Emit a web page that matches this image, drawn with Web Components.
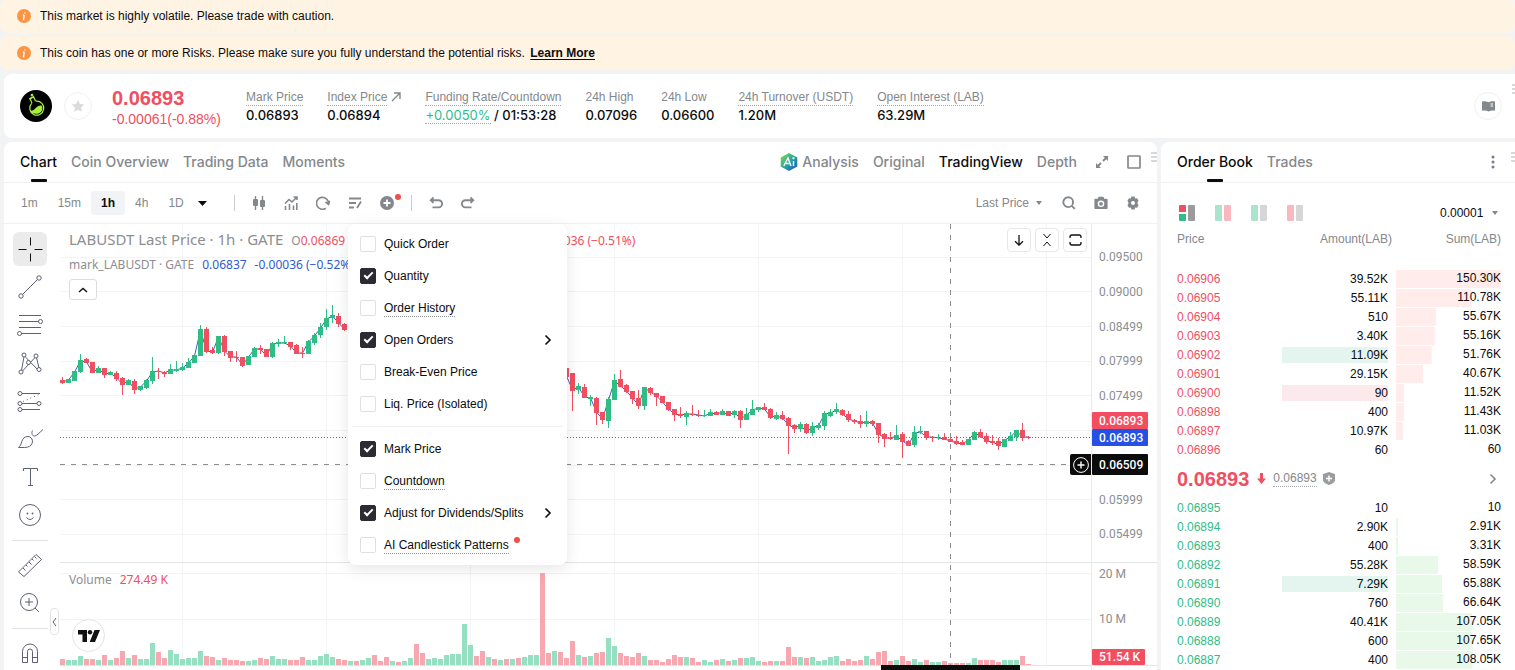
<!DOCTYPE html>
<html lang="en">
<head>
<meta charset="utf-8">
<title>LABUSDT Perpetual Futures</title>
<style>
  :root {
    --ink: #0c0c0d;
    --muted: #84888c;
    --line: #f0f1f2;
    --up: #2fbd85;
    --down: #ef4f60;
    --page: #f2f3f4;
    --ui: "Liberation Sans", Arial, sans-serif;
    --display: Inter, "Liberation Sans", sans-serif;
    --legend: "Noto Sans", "Open Sans", sans-serif;
  }
  html, body { height: 100%; margin: 0; overflow: hidden; background: var(--page); }
  body { font: 12px/16px var(--ui); color: var(--ink); }
</style>
</head>
<body>
<trade-app></trade-app>

<script>
const ICONS = {
  info: `<circle cx="7" cy="7" r="7" fill="#fb9543"/><path d="M7.9 3.2v1.2M7.3 6l-.8 4.6M5.9 6.2h1.3M5.8 10.6h1.5" stroke="#fff" stroke-width="1.3" fill="none"/>`,
  logo: `<circle cx="16" cy="16" r="16" fill="#000"/><g fill="none" stroke="#a6f03a" stroke-width="1.2"><path d="M12 13.2 10 8.6l3.6-1.7 2 4.4"/><path d="M16 11.2a7 7 0 1 1-4.4 2.2"/><circle cx="12" cy="5.2" r=".8"/><path d="M9 9l5-2.300"/></g><path d="M9.800 20.500c3 .5 4-.5 6-2.500s4-3 6.200-2c1.500 5-2 8-6 7.800-3 0-5.500-1.300-6.200-3.300z" fill="#a6f03a"/>`,
  star: `<path d="M7 1l1.900 3.900 4.300.6-3.100 3 .7 4.300L7 10.800 3.200 12.800l.7-4.300-3.100-3 4.300-.6z" fill="#d9dbdd"/>`,
  out: `<path d="M1 9l8-8M3 1h6v6" fill="none" stroke="currentColor" stroke-width="1.400"/>`,
  book: `<path d="M0 1.500c2.500-.6 4.300-.3 6.500.8v9.200c-1.700-1-3.500-1.200-6.500-.8zM6.500 2.300c1.700-1.100 3.500-1.400 6.500-.8v9.200c-2.500-.4-4.300-.2-6.500.8z" fill="currentColor"/><path d="M8.500 4H11M8.500 6H11" stroke="#fff"/>`,
  candles: `<path d="M3.500 0v14M10.500 0v14" stroke="currentColor" stroke-width="1.400"/><rect x="1" y="3" width="5" height="7" rx="1" fill="currentColor"/><rect x="8" y="4" width="5" height="7" rx="1" fill="currentColor"/>`,
  indicator: `<path d="M1 7.500l4-4 3 2.500L13 1M9.500 1H13v3M1.500 10v4M5.500 8v6M9.500 9.500v4.500M12.800 7v7" fill="none" stroke="currentColor" stroke-width="1.600"/>`,
  replay: `<path d="M9.800 12.300A6 6 0 1 1 12.500 7.500M9.500 5.800l3 2.600L14.200 5" fill="none" stroke="currentColor" stroke-width="1.700"/>`,
  listedit: `<path d="M1 2.500h12M1 7h7M1 11.500h5M13 5.500l-4 6.500" fill="none" stroke="currentColor" stroke-width="1.800"/>`,
  plus: `<circle cx="7" cy="7" r="7" fill="currentColor"/><path d="M3.500 7h7M7 3.500v7" stroke="#fff" stroke-width="1.800"/>`,
  undo: `<path d="M4.500 1.500L1.800 4.200l2.700 2.700M2 4.200h7.500a3.600 3.600 0 0 1 0 7.200H3.500" fill="none" stroke="currentColor" stroke-width="1.900"/>`,
  redo: `<path d="M9.500 1.500l2.700 2.700-2.700 2.700M12 4.200H4.500a3.600 3.600 0 0 0 0 7.200h6" fill="none" stroke="currentColor" stroke-width="1.900"/>`,
  search: `<circle cx="6.200" cy="6.200" r="4.900" fill="none" stroke="currentColor" stroke-width="1.900"/><path d="M9.800 9.800l3 3" stroke="currentColor" stroke-width="1.900"/>`,
  camera: `<path d="M1.200 2.800h2.600L4.600.8h4.800l.8 2h2.600q.8 0 .8.800v8.600q0 .8-.8.800H1.200q-.8 0-.8-.8V3.600q0-.8.8-.8z" fill="currentColor"/><circle cx="7" cy="7.800" r="2.600" fill="none" stroke="#fff" stroke-width="1.400"/>`,
  gear: `<path d="M5.500.6h3l.7 1.800 1.800-.2 1.600 2.600-1 1.400v1.600l1 1.400-1.600 2.600-1.800-.2-.7 1.800h-3l-.7-1.800-1.800.2-1.600-2.600 1-1.400V6.200l-1-1.400L3 2.200l1.800.2z" fill="currentColor"/><circle cx="7" cy="7" r="2" fill="#fff"/>`,
  expand: `<path d="M8 1h5v5zM6 13H1V8z" fill="currentColor"/><path d="M11.500 2.500L8 6M2.500 11.500L6 8" stroke="currentColor" stroke-width="1.900"/>`,
  square: `<rect x="1" y="1" width="12" height="12" rx=".5" fill="none" stroke="currentColor" stroke-width="1.700"/>`,
  caret: `<path d="M0 1h9L4.500 6z" fill="currentColor"/>`,
  smallcaret: `<path d="M0 1h6L3 5z" fill="currentColor"/>`,
  kebab: `<circle cx="2" cy="2" r="1.500" fill="currentColor"/><circle cx="2" cy="7" r="1.500" fill="currentColor"/><circle cx="2" cy="12" r="1.500" fill="currentColor"/>`,
  grip: `<path d="M0 1h6M0 5h6M0 9h6" stroke="#c9cbcd" stroke-width="1.600"/>`,
  ai: `<defs><linearGradient id="g" x1="0" y1="0" x2="1" y2="1"><stop offset="0" stop-color="#8fdc4a"/><stop offset=".5" stop-color="#28a89a"/><stop offset="1" stop-color="#1b4fd8"/></linearGradient></defs><path d="M9 0l8.300 4.500v9L9 18 .7 13.500v-9z" fill="url(#g)"/><path d="M3.800 13L8 5l3 8M6 10.500h3.500M13.500 8v5M13.500 4.200v2M12.500 5.200h2" fill="none" stroke="#fff" stroke-width="1.400"/>`,
  right: `<path d="M1.500 1.500L6 6l-4.500 4.500" fill="none" stroke="currentColor" stroke-width="1.600"/>`,
  left: `<path d="M4 1L1 5l3 4" fill="none" stroke="currentColor"/>`,
  up: `<path d="M1 5l4-3.500L9 5" fill="none" stroke="currentColor" stroke-width="1.400"/>`,
  downarrow: `<path d="M6 1v10M2 7.200l4 4 4-4" fill="none" stroke="currentColor" stroke-width="1.300"/>`,
  squeeze: `<path d="M2.500 0l3.500 4L9.500 0M2.500 12L6 8l3.500 4" fill="none" stroke="currentColor"/>`,
  frame: `<path d="M1 4V3a2 2 0 0 1 2-2h7a2 2 0 0 1 2 2v1M1 8v1a2 2 0 0 0 2 2h7a2 2 0 0 0 2-2V8" fill="none" stroke="currentColor" stroke-width="1.300"/>`,
  drop: `<path d="M3 0h3v5.500h3L4.500 11 0 5.500h3z" fill="currentColor"/>`,
  shield: `<path d="M6 0l6 2v6.500Q11.500 11 6 13 .5 11 0 8.500V2z" fill="#9a9da0"/><path d="M3 6.500h6M6 3.500v6" stroke="#fff" stroke-width="1.500"/>`,
  cross: `<path d="M14.500 2.500v8M14.500 18.500v8M2.500 14.500h8M18.500 14.500h8" stroke="currentColor"/>`,
  trend: `<path d="M6.500 21.500l15-15" stroke="currentColor"/><circle cx="5" cy="23" r="2.200" fill="none" stroke="currentColor"/><circle cx="23" cy="5" r="2.200" fill="none" stroke="currentColor"/>`,
  fib: `<path d="M3 4.500h22M3 10.500h19.500M3 16.500h22M5.500 22.500H25" stroke="currentColor"/><circle cx="24.500" cy="10.500" r="2" fill="none" stroke="currentColor"/><circle cx="3.500" cy="22.500" r="2" fill="none" stroke="currentColor"/>`,
  pattern: `<path d="M5.500 21.500L8 7.500M9.500 8l12 12.500M6.500 22L19.500 8M20.500 8.500l2.500 10.500" stroke="currentColor" fill="none"/><g fill="#fff" stroke="currentColor"><circle cx="8" cy="6" r="2"/><circle cx="20" cy="7" r="2"/><circle cx="5" cy="23" r="2"/><circle cx="23" cy="20.500" r="2"/><circle cx="12.500" cy="13.500" r="2"/></g>`,
  position: `<path d="M6 6.500h18M6 16.500h15M6 22.500h18" stroke="currentColor"/><path d="M7 14.500l16-7" stroke="currentColor" stroke-dasharray="1 3"/><g fill="none" stroke="currentColor"><circle cx="4" cy="6.500" r="2"/><circle cx="4" cy="16.500" r="2"/><circle cx="23" cy="16.500" r="2"/><circle cx="4" cy="22.500" r="2"/></g>`,
  brush: `<path d="M2.500 22.500c4-2 2-11 9.500-11 6 0 7 11-3.500 11zM16.500 5.500c-1.500 3 0 6 2.500 5.500 2-.5 4-3 8-6.500" fill="none" stroke="currentColor"/>`,
  text: `<path d="M7.500 8V5.500h14V8M14.500 5.500v17M12 22.500h5" fill="none" stroke="currentColor"/>`,
  smile: `<circle cx="14" cy="14" r="10.500" fill="none" stroke="currentColor"/><path d="M10.500 16.500q3.500 4 7 0" fill="none" stroke="currentColor"/><circle cx="11.500" cy="12.500" r=".9" fill="currentColor"/><circle cx="16.500" cy="12.500" r=".9" fill="currentColor"/>`,
  ruler: `<path d="M2.500 21L20 3.500l5.500 5L8 25.500zM7 17l2.500 2.500M10 14l1.500 1.500M13 11l2.500 2.500M16 8l1.500 1.500M18.500 5.500l2 2" fill="none" stroke="currentColor"/>`,
  zoom: `<circle cx="13" cy="13" r="8.500" fill="none" stroke="currentColor"/><path d="M19 19l4 4M9 13h8M13 9v8" stroke="currentColor"/>`,
  magnet: `<path d="M6.500 23.500v-11a7.500 7.500 0 0 1 15 0v11h-5v-11a2.500 2.500 0 0 0-5 0v11zM6.500 18.500h5M16.500 18.500h5" fill="none" stroke="currentColor"/>`,
  tv: `<path d="M0 0h9v12H4.500V4.500H0z" fill="#111"/><circle cx="12" cy="2.200" r="2.200" fill="#111"/><path d="M16.500 0H22l-5 12h-5.300z" fill="#111"/>`,
  pluscircle: `<circle cx="8" cy="8" r="7.400" fill="none" stroke="#fff"/><path d="M4.500 8h7M8 4.500v7" stroke="#fff" stroke-width="1.400"/>`
};

const SHARED = `
  *, *::before, *::after { box-sizing: border-box; }
  button, select { font: inherit; color: inherit; background: none; border: 0; padding: 0; margin: 0; }
  button { cursor: pointer; }
`;

class BaseElement extends HTMLElement {
  constructor() {
    super();
    this.attachShadow({ mode: 'open' });
  }
  connectedCallback() {
    this.shadowRoot.innerHTML = `<style>${SHARED}${this.css()}</style>${this.html()}`;
  }
  css() { return ''; }
  html() { return '<slot></slot>'; }
}

/* <ui-icon name w h>: one glyph from ICONS */
customElements.define('ui-icon', class extends BaseElement {
  css() { return ':host{display:inline-flex;flex:none} svg{display:block}'; }
  html() {
    const w = this.getAttribute('w') || 14, h = this.getAttribute('h') || w;
    return `<svg width="${w}" height="${h}" viewBox="0 0 ${w} ${h}" aria-hidden="true">${ICONS[this.getAttribute('name')]}</svg>`;
  }
});

customElements.define('market-notice', class extends BaseElement {
  css() { return `
    :host { display: flex; align-items: center; gap: 9px; height: 34px; padding: 0 17px; border-radius: 8px; background: #fff3e3; }
    ::slotted(a) { color: var(--ink); font-weight: 700; margin-left: 2px; text-underline-offset: 2px; }`; }
  html() { return '<ui-icon name="info" w="14"></ui-icon><span><slot></slot></span>'; }
});

customElements.define('market-stat', class extends BaseElement {
  css() { return `
    :host { display: flex; flex-direction: column; white-space: nowrap; }
    .label { color: var(--muted); display: flex; gap: 4px; align-items: center; }
    .label span { height: 17px; border-bottom: 1px solid transparent; }
    :host([hint]) .label span { border-bottom: 1px dotted #a5a8ab; }
    .value { font: 500 13px/18px var(--display); }`; }
  html() { return `
    <div class="label"><span>${this.getAttribute('label')}</span><slot name="icon"></slot></div>
    <div class="value"><slot></slot></div>`; }
});

customElements.define('market-header', class extends BaseElement {
  css() { return `
    :host { display: flex; align-items: center; position: relative; height: 64px; margin: 4px 0 4px 4px; padding: 0 13px 0 16px; background: #fff; border-radius: 8px 0 0 8px; }
    .fav, .guide { display: grid; place-items: center; width: 28px; height: 28px; border: 1px solid var(--line); border-radius: 50%; color: var(--muted); }
    .fav { margin: 0 20px 0 12px; }
    .price { width: 134px; padding-top: 4px; color: var(--down); }
    .price b { display: block; font-size: 20px; line-height: 22px; }
    .price span { font-size: 14px; line-height: 20px; }
    .stats { display: flex; gap: 24px; flex: 1; }
    .rate { color: var(--up); font-weight: 400; border-bottom: 1px dotted #a5a8ab; }
    .grip { position: absolute; right: -3px; top: 10px; }`; }
  html() { return `
    <ui-icon name="logo" w="32"></ui-icon>
    <button class="fav" aria-label="Add to favourites"><ui-icon name="star" w="14"></ui-icon></button>
    <div class="price"><b>0.06893</b><span>-0.00061(-0.88%)</span></div>
    <div class="stats">
      <market-stat label="Mark Price" hint>0.06893</market-stat>
      <market-stat label="Index Price" hint>0.06894<ui-icon slot="icon" name="out" w="10"></ui-icon></market-stat>
      <market-stat label="Funding Rate/Countdown" hint><span class="rate">+0.0050%</span> / 01:53:28</market-stat>
      <market-stat label="24h High">0.07096</market-stat>
      <market-stat label="24h Low">0.06600</market-stat>
      <market-stat label="24h Turnover (USDT)" hint>1.20M</market-stat>
      <market-stat label="Open Interest (LAB)" hint>63.29M</market-stat>
    </div>
    <button class="guide" aria-label="Guide"><ui-icon name="book" w="13"></ui-icon></button>
    <ui-icon class="grip" name="grip" w="6" h="10"></ui-icon>`; }
});

/* <panel-tab>: a tab caption, underlined when active */
customElements.define('panel-tab', class extends BaseElement {
  css() { return `
    :host { display: flex; height: 40px; }
    button { position: relative; display: flex; align-items: center; gap: 4px; font: 500 14px/16px var(--display); color: var(--muted); white-space: nowrap; }
    :host([active]) button, :host([picked]) button { color: var(--ink); }
    :host([active]) button::after { content: ""; position: absolute; left: calc(50% - 8px); bottom: 0; width: 16px; height: 3px; border-radius: 1px; background: var(--ink); }`; }
  html() { return '<button><slot></slot></button>'; }
});

customElements.define('chart-toolbar', class extends BaseElement {
  css() { return `
    :host { display: flex; align-items: center; height: 41px; padding: 0 17px 0 7px; border-bottom: 1px solid var(--line); color: var(--muted); }
    .iv { height: 24px; padding: 0 10px; border-radius: 4px; }
    .iv[aria-pressed=true] { background: #f2f3f4; color: var(--ink); font-weight: 700; }
    .more { color: var(--ink); display: flex; padding: 0 4px; }
    .rule { width: 1px; height: 16px; background: #c9cbcd; margin: 0 17px; }
    .more + .rule { margin-left: 23px; }
    .icons { display: flex; gap: 18px; }
    .icons button { position: relative; display: flex; }
    .new::after { content: ""; position: absolute; right: -7px; top: -2px; width: 6px; height: 6px; border-radius: 50%; background: #f04f45; }
    .last { margin: 0 20px 0 auto; display: flex; align-items: center; gap: 7px; }`; }
  html() {
    const iv = ['1m', '15m', '1h', '4h', '1D'].map(t => `<button class="iv" aria-pressed="${t === '1h'}">${t}</button>`).join('');
    const b = (n, l, c = '') => `<button class="${c}" aria-label="${l}"><ui-icon name="${n}" w="14"></ui-icon></button>`;
    return `${iv}<button class="more" aria-label="More intervals"><ui-icon name="caret" w="9" h="7"></ui-icon></button>
      <span class="rule"></span>
      <div class="icons">${b('candles', 'Chart type')}${b('indicator', 'Indicators')}${b('replay', 'Replay')}${b('listedit', 'Templates')}${b('plus', 'Display options', 'new')}</div>
      <span class="rule"></span>
      <div class="icons">${b('undo', 'Undo')}${b('redo', 'Redo')}</div>
      <button class="last">Last Price <ui-icon name="smallcaret" w="6"></ui-icon></button>
      <div class="icons">${b('search', 'Search')}${b('camera', 'Snapshot')}${b('gear', 'Settings')}</div>`;
  }
});

customElements.define('draw-tools', class extends BaseElement {
  css() { return `
    :host { position: relative; display: flex; flex-direction: column; align-items: center; gap: 4px; width: 56px; padding: 8px 4px 0 0; color: #5d6070; }
    button { display: grid; place-items: center; width: 34px; height: 34px; border-radius: 6px; flex: none; }
    button[aria-pressed=true] { background: #ebebeb; color: #111; }
    hr { width: 36px; height: 1px; margin: 4px 0 3px; border: 0; background: #e3e4e6; flex: none; }
    .fold { position: absolute; right: 1px; top: 384px; width: 9px; height: 27px; border: 1px solid #e3e4e6; border-radius: 4px; background: #fff; }`; }
  html() {
    const b = n => `<button aria-label="${n}" aria-pressed="${n === 'cross'}"><ui-icon name="${n}" w="28"></ui-icon></button>`;
    return ['cross', 'trend', 'fib', 'pattern', 'position', 'brush', 'text', 'smile'].map(b).join('')
      + '<hr>' + b('ruler') + b('zoom') + '<hr>' + b('magnet')
      + '<button class="fold" aria-label="Hide tools"><ui-icon name="left" w="5" h="10"></ui-icon></button>';
  }
});

/* Bars: [slot, direction, high, body top, body bottom, low] in thirds of a pixel.
   The left group is measured from the plot's top minus 44px, the right one from plus 116px. */
const LEFT = [[0,'d',590,600,608,613],[1,'u',597,597,608,608],[2,'u',573,573,602,602],[3,'u',522,540,575,580],[4,'d',534,537,548,548],[5,'d',546,546,578,578],[6,'u',558,563,578,578],[7,'d',565,565,585,594],[8,'u',574,577,584,584],[9,'d',574,579,597,602],[10,'d',592,593,614,644],[11,'u',597,601,614,614],[12,'d',598,602,629,641],[13,'u',617,619,630,632],[14,'u',596,600,624,626],[15,'u',531,573,602,612],[16,'d',565,573,576,597],[17,'d',573,576,581,590],[18,'u',553,568,581,581],[19,'u',543,568,572,575],[20,'u',548,561,569,572],[21,'u',534,546,563,563],[22,'u',525,525,548,548],[23,'u',435,447,527,527],[24,'d',441,447,515,518],[25,'d',502,510,518,521],[26,'u',468,468,518,522],[27,'d',465,468,515,528],[28,'d',514,514,534,547],[29,'d',514,530,534,546],[30,'d',531,531,558,560],[31,'u',528,528,554,554],[32,'u',500,504,531,531],[33,'d',494,504,509,521],[34,'d',507,507,530,530],[35,'u',487,489,531,533],[36,'u',477,487,491,500],[37,'u',468,485,488,492],[38,'d',486,486,501,509],[39,'d',492,495,522,522],[40,'d',501,520,523,533],[41,'u',480,483,522,522],[42,'u',459,465,489,494],[43,'u',429,441,465,473],[44,'u',387,413,441,450],[45,'u',375,404,414,428],[46,'d',399,407,432,440],[47,'d',429,432,450,453],[84,'d',560,565,592,600],[85,'d',579,579,632,692],[86,'u',609,618,630,642],[87,'d',612,621,655,655],[88,'u',645,652,656,677],[89,'d',652,653,699,735],[90,'d',696,696,720,732],[91,'u',652,657,723,744],[92,'u',581,599,659,659],[93,'d',570,597,621,621],[94,'d',612,614,635,640],[95,'d',632,632,656,672],[96,'d',630,654,677,687]];
const RIGHT = [[97,'u',141,141,198,210],[98,'d',141,144,159,165],[99,'d',159,159,171,198],[100,'d',168,168,189,189],[101,'d',186,186,210,213],[102,'d',207,207,225,243],[103,'d',201,222,228,234],[104,'u',213,219,231,255],[105,'d',195,221,224,228],[106,'d',210,224,228,231],[107,'u',210,224,228,231],[108,'u',207,216,228,228],[109,'d',213,216,225,225],[110,'u',207,213,225,225],[111,'d',213,213,228,228],[112,'u',210,213,225,234],[113,'d',210,213,240,264],[114,'u',204,222,240,240],[115,'u',180,207,225,225],[116,'u',201,202,210,216],[117,'d',189,202,210,210],[118,'d',204,207,234,237],[119,'u',216,225,236,240],[120,'d',213,225,237,240],[121,'d',231,234,258,342],[122,'d',252,255,267,279],[123,'u',246,252,267,276],[124,'d',249,252,279,282],[125,'u',246,258,279,288],[126,'u',249,255,263,270],[127,'u',213,219,258,270],[128,'u',207,216,228,231],[129,'u',189,207,216,222],[130,'d',207,210,225,228],[131,'d',213,222,240,246],[132,'d',237,240,246,252],[133,'d',225,243,252,264],[134,'u',213,243,252,261],[135,'d',240,243,252,258],[136,'d',249,249,285,309],[137,'d',280,282,297,321],[138,'d',276,294,298,300],[139,'u',255,285,300,300],[140,'d',276,282,306,354],[141,'d',300,303,318,318],[142,'u',258,276,315,321],[143,'u',258,273,276,282],[144,'d',273,273,294,300],[145,'d',288,292,294,306],[146,'u',282,292,294,300],[147,'d',279,291,300,300],[148,'d',294,297,306,306],[149,'d',288,303,312,315],[150,'d',300,306,315,315],[151,'u',297,297,315,315],[152,'u',273,276,300,300],[153,'d',267,276,291,294],[154,'d',279,288,306,312],[155,'d',285,303,309,315],[156,'d',294,303,318,330],[157,'u',297,297,321,321],[158,'u',276,288,303,303],[159,'u',270,270,291,303],[160,'d',249,270,294,303],[161,'d',288,292,294,297]];
const VOLUME = 'd6 u5 u5 u9 d6 d6 u5 d10 u5 d7 d14 u7 d10 u6 u6 u22 d13 d7 u15 u11 u6 u7 u7 u14 d9 d8 u5 d7 d5 d5 d4 u4 u5 d7 d6 u9 u6 u6 d5 d5 d8 u5 u5 u9 u11 u8 d6 d5 u4 d4 u5 u7 d10 d4 d8 u4 d3 u4 u7 d21 d12 u6 u7 u6 u10 u11 u11 u41 u20 d9 d14 u8 d6 u5 d6 u6 d7 u8 u10 u10 d92 d12 u14 d13 d7 d24 u10 d8 u9 d12 d13 u27 u19 d12 d9 d8 d12 u9 d5 d5 d3 d6 d10 d8 u8 d7 d3 u5 u3 d5 u6 d4 u5 d7 u7 u8 u4 d3 d4 u4 d4 d18 d8 u8 d7 u8 u4 u5 u8 u9 d4 d6 d4 d5 u9 d6 d13 d14 d4 u5 d9 d4 u6 u3 d5 u3 u3 d4 d2 d2 d2 u2 u7 d5 d5 d5 d3 u5 u5 u5 d9 d1'.split(' ');

customElements.define('price-plot', class extends BaseElement {
  css() { return `
    :host { display: block; position: relative; min-width: 0; overflow: hidden; }
    svg { display: block; width: 100%; height: 100%; }`; }
  html() {
    const C = { u: '#2fbd85', d: '#ef4f60' }, V = { u: '#97dfc2', d: '#f7a7b0' };
    const bars = [...LEFT.map(b => [b, -44]), ...RIGHT.map(b => [b, 116])].map(([b, off]) =>
      ({ i: b[0], x: b[0] * 6, c: b[1], y: b.slice(2).map(v => Math.round(v / 3) + off) }));
    const h = [33, 67, 102, 137, 171, 206, 241, 275, 310, 349, 395].map(y => `<path d="M0 ${y}.500H3000" stroke="#f3f4f5"/>`).join('');
    const v = [122, 266, 410, 554, 698, 842, 986].map(x => `<path d="M${x}.500 0V441" stroke="#f3f4f5"/>`).join('');
    const line = part => `<polyline fill="none" stroke="#3f5bd6" points="${part.map(b => `${b.x + 2.5},${b.c === 'u' ? b.y[1] + 1 : b.y[2] - 1}`).join(' ')}"/>`;
    const candles = bars.map(b => `<rect x="${b.x + 2}" y="${b.y[0]}" width="1" height="${b.y[3] - b.y[0]}" fill="${C[b.c]}"/><rect x="${b.x}" y="${b.y[1]}" width="5" height="${Math.max(1, b.y[2] - b.y[1])}" fill="${C[b.c]}"/>`).join('');
    const vol = VOLUME.map((s, i) => { const n = +s.slice(1); return `<rect x="${i * 6}" y="${441 - n}" width="5" height="${n}" fill="${V[s[0]]}"/>`; }).join('');
    return `<svg role="img" aria-label="LABUSDT candles with volume">${h}${v}
      <path d="M0 338.500H3000" stroke="#e4e5e8"/><path d="M0 441.500H3000" stroke="#e4e5e8"/>${vol}
      ${line(bars.filter(b => b.i < 60))}${line(bars.filter(b => b.i > 60))}${candles}
      <path d="M0 213.500H3000" stroke="#b8506a" stroke-dasharray="1 2"/>
      <path d="M0 240.500H3000" stroke="#8c8c90" stroke-dasharray="5 6"/>
      <path d="M890.500 0V441" stroke="#8c8c90" stroke-dasharray="5 6"/>
      <rect x="821" y="441" width="139" height="5" fill="#0c0c0d"/></svg>`;
  }
});

customElements.define('price-axis', class extends BaseElement {
  css() { return `
    :host { display: block; width: 66px; border-left: 1px solid #e9ebee; }
    svg { display: block; width: 100%; height: 100%; font: 12px Roboto, sans-serif; }`; }
  html() {
    const t = (y, s) => `<text x="7" y="${y + 4}" fill="#8c8e92">${s}</text>`;
    const tag = (y, hgt, c, s, w = 56) => `<rect y="${y}" width="${w}" height="${hgt}" rx="1" fill="${c}"/><text x="7" y="${y + hgt / 2 + 4.5 | 0}" fill="#fff" font-weight="500">${s}</text>`;
    return `<svg><path d="M0 338.500H80M0 441.500H80" stroke="#e4e5e8"/>
      ${t(33, '0.09500')}${t(68, '0.09000')}${t(103, '0.08499')}${t(137, '0.07999')}${t(172, '0.07499')}${t(276, '0.05999')}${t(310, '0.05499')}${t(350, '20 M')}${t(395, '10 M')}
      ${tag(188, 17, '#f44d60', '0.06893')}${tag(205, 17, '#2450e6', '0.06893')}${tag(230, 21, '#0c0c0d', '0.06509')}${tag(425, 16, '#f44d60', '51.54 K', 53)}</svg>`;
  }
});

customElements.define('menu-option', class extends BaseElement {
  css() { return `
    :host { display: flex; align-items: center; height: 32px; padding: 0 15px 0 12px; }
    label { display: flex; align-items: center; gap: 8px; flex: 1; }
    input { appearance: none; width: 16px; height: 16px; margin: 0; border: 1px solid #dfe0e2; border-radius: 2px; display: grid; place-items: center; }
    input:checked { background: #2b2c33; border-color: #2b2c33; }
    input:checked::before { content: ""; width: 9px; height: 5px; margin-top: -3px; border: solid #fff; border-width: 0 0 2px 2px; transform: rotate(-45deg); }
    .name { position: relative; }
    :host([hint]) .name { border-bottom: 1px dotted #8f9296; margin-bottom: -1px; }
    :host([fresh]) .name::after { content: ""; position: absolute; right: -11px; top: 0; width: 6px; height: 6px; border-radius: 50%; background: #f04f45; }`; }
  html() { return `<label><input type="checkbox" ${this.hasAttribute('checked') ? 'checked' : ''}><span class="name"><slot></slot></span></label>
    ${this.hasAttribute('more') ? '<ui-icon name="right" w="8" h="12"></ui-icon>' : ''}`; }
});

customElements.define('display-menu', class extends BaseElement {
  css() { return `
    :host { display: block; width: 219px; padding: 4px 0; border-radius: 8px; background: #fff; box-shadow: 0 4px 16px rgba(0,0,0,.1); }
    hr { height: 1px; margin: 6px 4px; border: 0; background: #eff0f1; }`; }
  html() { return `
    <menu-option>Quick Order</menu-option>
    <menu-option checked>Quantity</menu-option>
    <menu-option hint>Order History</menu-option>
    <menu-option checked more>Open Orders</menu-option>
    <menu-option>Break-Even Price</menu-option>
    <menu-option>Liq. Price (Isolated)</menu-option>
    <hr>
    <menu-option checked>Mark Price</menu-option>
    <menu-option hint>Countdown</menu-option>
    <menu-option checked more>Adjust for Dividends/Splits</menu-option>
    <menu-option hint fresh>AI Candlestick Patterns</menu-option>`; }
});

customElements.define('chart-panel', class extends BaseElement {
  css() { return `
    :host { display: flex; flex-direction: column; position: relative; min-width: 0; background: #fff; border-radius: 8px 8px 0 0; }
    nav { display: flex; align-items: center; gap: 14px; height: 41px; padding: 0 16px; border-bottom: 1px solid var(--line); color: var(--muted); }
    .gap { flex: 1; }
    nav button { display: flex; margin-left: 4px; }
    .body { flex: 1; min-height: 0; display: grid; grid-template-columns: auto 1fr auto; position: relative; }
    .grip { position: absolute; right: 0; top: 10px; }
    .legend { position: absolute; left: 65px; top: 6px; font: 12px/18px var(--legend); color: #8c8e92; white-space: nowrap; }
    .legend .row { display: flex; align-items: baseline; gap: 8px; }
    .legend .main { font-size: 15px; line-height: 18px; }
    .legend .row + .row { margin-top: 6px; }
    .legend .change { margin-left: 180px; }
    .red { color: var(--down); }
    .blue { color: #2f5bd0; }
    .fold { display: grid; place-items: center; width: 28px; height: 21px; margin-top: 5px; border: 1px solid #dcdde0; border-radius: 3px; background: #fff; color: #111; }
    .vol { position: absolute; left: 65px; top: 347px; font: 12px/18px var(--legend); color: #8c8e92; display: flex; gap: 8px; }
    .actions { position: absolute; right: 70px; top: 4px; display: flex; gap: 4px; }
    .actions button { display: grid; place-items: center; width: 24px; height: 24px; border: 1px solid #e6e7e9; border-radius: 4px; background: #fff; color: #111; }
    .brand { position: absolute; left: 68px; top: 395px; display: grid; place-items: center; width: 33px; height: 33px; border: 1px solid #e3e4e6; border-radius: 50%; background: #fff; }
    .add { position: absolute; right: 66px; top: 230px; display: grid; place-items: center; width: 21px; height: 21px; border-radius: 2px 0 0 2px; background: #0c0c0d; }
    display-menu { position: absolute; left: 344px; top: 0; }`; }
  html() { return `
    <nav>
      <panel-tab active>Chart</panel-tab><panel-tab>Coin Overview</panel-tab><panel-tab>Trading Data</panel-tab><panel-tab>Moments</panel-tab>
      <span class="gap"></span>
      <panel-tab><ui-icon name="ai" w="18"></ui-icon>Analysis</panel-tab><panel-tab>Original</panel-tab><panel-tab picked>TradingView</panel-tab><panel-tab>Depth</panel-tab>
      <button aria-label="Expand"><ui-icon name="expand" w="14"></ui-icon></button>
      <button aria-label="Full screen"><ui-icon name="square" w="14"></ui-icon></button>
    </nav>
    <ui-icon class="grip" name="grip" w="6" h="10"></ui-icon>
    <chart-toolbar></chart-toolbar>
    <div class="body">
      <draw-tools></draw-tools>
      <price-plot></price-plot>
      <price-axis></price-axis>
      <div class="legend">
        <div class="row"><span class="main">LABUSDT Last Price · 1h · GATE</span>
          <span>O<span class="red">0.06869</span></span><span class="red change">−0.00036 (−0.51%)</span></div>
        <div class="row"><span>mark_LABUSDT · GATE</span><span class="blue">0.06837</span><span class="blue">-0.00036 (−0.52%)</span></div>
        <button class="fold" aria-label="Collapse legend"><ui-icon name="up" w="10" h="6"></ui-icon></button>
      </div>
      <div class="vol"><span>Volume</span><span class="red">274.49 K</span></div>
      <div class="brand"><ui-icon name="tv" w="22" h="12"></ui-icon></div>
      <div class="actions">
        <button aria-label="Move down"><ui-icon name="downarrow" w="12"></ui-icon></button>
        <button aria-label="Collapse"><ui-icon name="squeeze" w="12"></ui-icon></button>
        <button aria-label="Maximize"><ui-icon name="frame" w="13" h="12"></ui-icon></button>
      </div>
      <button class="add" aria-label="Add at price"><ui-icon name="pluscircle" w="16"></ui-icon></button>
      <display-menu></display-menu>
    </div>`; }
});

/* Rows: price, amount, sum, depth share of the sum column (%), highlighted side */
const ASKS = [['0.06906','39.52K','150.30K',100],['0.06905','55.11K','110.78K',72],['0.06904','510','55.67K',38],['0.06903','3.40K','55.16K',37],['0.06902','11.09K','51.76K',34,'buy'],['0.06901','29.15K','40.67K',26],['0.06900','90','11.52K',8,'sell'],['0.06898','400','11.43K',8],['0.06897','10.97K','11.03K',7],['0.06896','60','60',0]];
const BIDS = [['0.06895','10','10',0],['0.06894','2.90K','2.91K',2],['0.06893','400','3.31K',2],['0.06892','55.28K','58.59K',40],['0.06891','7.29K','65.88K',44,'buy'],['0.06890','760','66.64K',45],['0.06889','40.41K','107.05K',73],['0.06888','600','107.65K',73],['0.06887','400','108.05K',73]];

customElements.define('order-book', class extends BaseElement {
  css() { return `
    :host { display: block; position: relative; background: #fff; border-radius: 8px 0 0 0; }
    nav { display: flex; align-items: center; gap: 14px; height: 41px; padding: 0 20px 0 16px; border-bottom: 1px solid var(--line); color: #777a90; }
    nav button { margin-left: auto; display: flex; }
    .grip { position: absolute; right: -2px; top: 10px; }
    .view { display: flex; gap: 20px; align-items: center; height: 28px; margin-top: 16px; padding: 0 17px 0 18px; }
    .mode { display: flex; gap: 2px; width: 16px; height: 16px; opacity: .4; }
    .mode.on { opacity: 1; }
    .mode i { flex: 1; background: var(--c); border-radius: 1px; }
    .mode i.split { background: linear-gradient(var(--down) 7px, #fff 7px 9px, var(--up) 9px); }
    .step { margin-left: auto; display: flex; align-items: center; gap: 8px; color: var(--muted); }
    select { appearance: none; color: var(--ink); cursor: pointer; }
    table { width: calc(100% - 30px); margin: 0 14px 0 16px; border-collapse: collapse; table-layout: fixed; text-align: right; }
    th { height: 43px; padding: 4px 0 0; vertical-align: top; font-weight: 400; color: var(--muted); line-height: 16px; }
    th:nth-child(2) { padding-right: 4px; }
    th:first-child, td:first-child { text-align: left; }
    td { height: 19px; padding: 0 0 2px; line-height: 16px; }
    td:nth-child(2) { padding-right: 8px; }
    td:nth-child(3) { padding: 0; }
    td:nth-child(2) span { display: block; }
    .buy { background: #e4f5ef; } .sell { background: #fbe9eb; }
    .sum { height: 18px; margin-bottom: 1px; line-height: 17px; background: linear-gradient(var(--bar), var(--bar)) no-repeat left / var(--share) 100%; }
    .asks { --bar: #ffeceb; } .bids { --bar: #e8f8e9; }
    .asks td:first-child { color: var(--down); } .bids td:first-child { color: var(--up); }
    .mid td { height: 39px; padding: 0 0 2px; }
    .mid div { display: flex; align-items: center; color: var(--muted); }
    .mid b { font-size: 20px; color: var(--down); margin-right: 8px; }
    .mid .drop { color: var(--down); margin-right: 7px; }
    .mid u { text-decoration: none; border-bottom: 1px dotted #a5a8ab; margin-right: 6px; line-height: 15px; }
    .mid button { margin-left: auto; display: flex; padding-right: 4px; }`; }
  html() {
    const row = r => `<tr><td>${r[0]}</td><td><span class="${r[4] || ''}">${r[1]}</span></td><td><div class="sum" style="--share:${r[3]}%">${r[2]}</div></td></tr>`;
    const mode = (a, b, on = '') => `<button class="mode ${on}" aria-label="Book layout">${a}${b}</button>`;
    const i = c => `<i style="--c:${c}"></i>`;
    return `
    <nav><panel-tab active>Order Book</panel-tab><panel-tab>Trades</panel-tab><button aria-label="More"><ui-icon name="kebab" w="4" h="14"></ui-icon></button></nav>
    <ui-icon class="grip" name="grip" w="6" h="10"></ui-icon>
    <div class="view">
      ${mode('<i class="split"></i>', i('#9b9b9d'), 'on')}${mode(i('#2fbd85'), i('#f44d60'))}${mode(i('#2fbd85'), i('#9b9b9d'))}${mode(i('#f44d60'), i('#9b9b9d'))}
      <label class="step"><select aria-label="Price step"><option>0.00001</option></select><ui-icon name="smallcaret" w="6"></ui-icon></label>
    </div>
    <table>
      <colgroup><col style="width:105px"><col><col style="width:105px"></colgroup>
      <thead><tr><th>Price</th><th>Amount(LAB)</th><th>Sum(LAB)</th></tr></thead>
      <tbody class="asks">${ASKS.map(row).join('')}</tbody>
      <tbody class="mid"><tr><td colspan="3"><div><b>0.06893</b><ui-icon class="drop" name="drop" w="9" h="12"></ui-icon><u>0.06893</u><ui-icon name="shield" w="12" h="13"></ui-icon><button aria-label="Details"><ui-icon name="right" w="8" h="12"></ui-icon></button></div></td></tr></tbody>
      <tbody class="bids">${BIDS.map(row).join('')}</tbody>
    </table>`;
  }
});

customElements.define('trade-app', class extends BaseElement {
  css() { return `
    :host { display: flex; flex-direction: column; height: 100vh; overflow: hidden; }
    .notices { display: grid; gap: 3px; margin-top: -1px; }
    main { flex: 1; min-height: 0; display: grid; grid-template-columns: minmax(0, 1fr) 354px; gap: 4px; padding-left: 4px; }
    main > * { min-height: 0; overflow: hidden; }`; }
  html() { return `
    <div class="notices">
      <market-notice>This market is highly volatile. Please trade with caution.</market-notice>
      <market-notice>This coin has one or more Risks. Please make sure you fully understand the potential risks. <a href="#risks">Learn More</a></market-notice>
    </div>
    <market-header></market-header>
    <main><chart-panel></chart-panel><order-book></order-book></main>`; }
});
</script>
</body>
</html>
